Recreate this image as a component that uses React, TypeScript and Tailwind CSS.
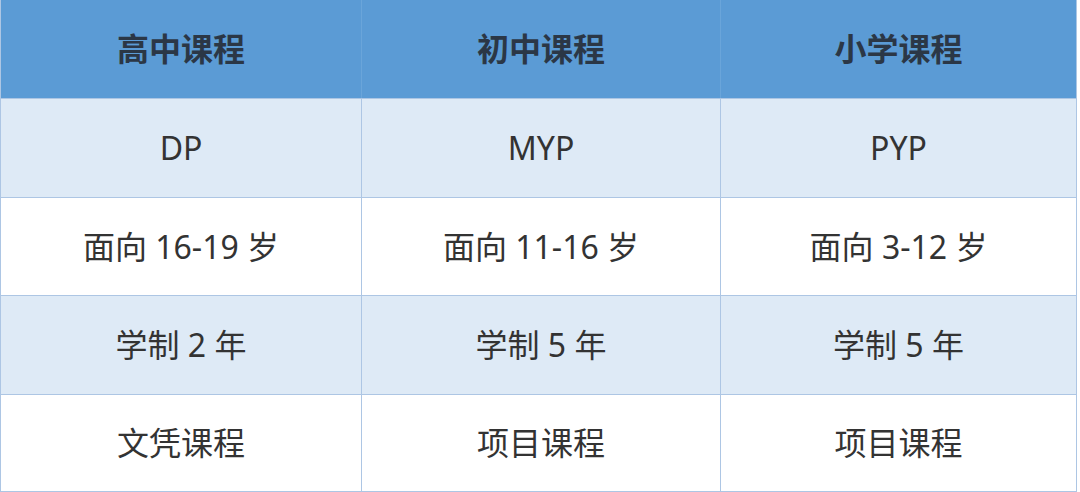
const heads = ['高中课程', '初中课程', '小学课程'];

const rows = [
  ['DP', 'MYP', 'PYP'],
  ['面向 16-19 岁', '面向 11-16 岁', '面向 3-12 岁'],
  ['学制 2 年', '学制 5 年', '学制 5 年'],
  ['文凭课程', '项目课程', '项目课程'],
];

const font = { fontFamily: '"Noto Sans", "Noto Sans CJK SC", sans-serif' };

export default function App() {
  return (
    <div className="w-[1080px] h-[492px] bg-white pr-[3px]" style={font}>
      <div className="h-full border-x border-b border-[#adc6e4] grid grid-cols-[360px_359px_1fr] grid-rows-[98px_99px_98px_99px_1fr]">
        {heads.map((h, i) => (
          <div
            key={h}
            className={`bg-[#5b9bd5] flex items-center justify-center text-[32px] font-bold text-[#2b3746] ${i > 0 ? 'border-l border-[#6aa5da]' : ''}`}
          >
            {h}
          </div>
        ))}
        {rows.map((row, r) =>
          row.map((cell, c) => (
            <div
              key={`${r}-${c}`}
              className={`flex items-center justify-center text-[32px] text-[#333] border-t border-[#adc6e4] ${c > 0 ? 'border-l' : ''} ${r % 2 === 0 ? 'bg-[#deeaf6]' : 'bg-white'}`}
            >
              {cell}
            </div>
          ))
        )}
      </div>
    </div>
  );
}
